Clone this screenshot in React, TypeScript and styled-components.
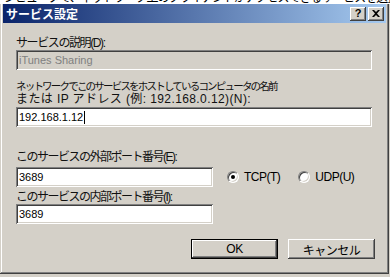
import React from 'react';
import styled, { createGlobalStyle } from 'styled-components';

const GlobalStyle = createGlobalStyle`
  html, body {
    margin: 0;
    padding: 0;
    background: #d4d0c8;
    overflow: hidden;
  }
  body {
    font-family: 'Liberation Sans', 'Noto Sans CJK JP', sans-serif;
    font-size: 12px;
    color: #000;
  }
`;

export default function App() {
  return (
    <>
      <GlobalStyle />
      <Backdrop>
        <BackdropText>
          ンピュータで、ネットワーク上のクライアントがアクセスできるサービスを選択してください。
        </BackdropText>
      </Backdrop>
      <Window>
        <TitleBar>
          <Title>サービス設定</Title>
          <CaptionButtons>
            <CaptionButton>?</CaptionButton>
            <CaptionButton>
              <svg width='8' height='7' viewBox='0 0 8 7'>
                <path
                  d='M0 0h2l2 2 2-2h2L5 3.5 8 7H6L4 5 2 7H0l3-3.5z'
                  fill='#000'
                />
              </svg>
            </CaptionButton>
          </CaptionButtons>
        </TitleBar>
        <Client>
          <Label $top={14} $bottom={0}>
            <Line $spacing={-1.4}>サービスの説明(D):</Line>
          </Label>
          <Field $width={356} $disabled>
            iTunes Sharing
          </Field>
          <Label $top={10} $bottom={1}>
            <Line $spacing={-1.8} $size={10.5}>
              ネットワークでこのサービスをホストしているコンピュータの名前
            </Line>
            <Line $spacing={0.4}>または IP アドレス (例: 192.168.0.12)(N):</Line>
          </Label>
          <Field $width={356}>
            192.168.1.12
            <Caret />
          </Field>
          <Label $top={24} $bottom={3}>
            <Line $spacing={-1.5}>このサービスの外部ポート番号(E):</Line>
          </Label>
          <PortRow>
            <Field $width={197}>3689</Field>
            <RadioGroup>
              <RadioOption>
                <Radio $checked />
                TCP(T)
              </RadioOption>
              <RadioOption>
                <Radio />
                UDP(U)
              </RadioOption>
            </RadioGroup>
          </PortRow>
          <Label $top={4} $bottom={0}>
            <Line $spacing={-1.5}>このサービスの内部ポート番号(I):</Line>
          </Label>
          <Field $width={197}>3689</Field>
          <ButtonRow>
            <PushButton $default>OK</PushButton>
            <PushButton>キャンセル</PushButton>
          </ButtonRow>
        </Client>
      </Window>
    </>
  );
}

const Backdrop = styled.div`
  height: 4px;
  overflow: hidden;
  background: #fff;
`;

const BackdropText = styled.div`
  margin-top: -8px;
  line-height: 12px;
  white-space: nowrap;
  padding-left: 4px;
  letter-spacing: -1px;
`;

const Window = styled.div`
  width: 389px;
  height: 270px;
  box-sizing: border-box;
  padding: 0 3px 3px 3px;
  background: #d4d0c8;
  box-shadow: inset -1px -1px #404040, inset 1px 0 #d4d0c8,
    inset -2px -2px #808080, inset 2px 0 #ffffff;
  display: flex;
  flex-direction: column;
`;

const TitleBar = styled.div`
  height: 19px;
  flex-shrink: 0;
  display: flex;
  align-items: center;
  justify-content: space-between;
  padding: 0 2px 0 3px;
  background: linear-gradient(to right, #0a246a, #a6caf0);
`;

const Title = styled.div`
  color: #fff;
  font-family: 'Noto Sans CJK JP', sans-serif;
  font-weight: bold;
  font-size: 12px;
  line-height: 14px;
`;

const CaptionButtons = styled.div`
  display: flex;
  gap: 2px;
`;

const CaptionButton = styled.div`
  width: 16px;
  height: 14px;
  box-sizing: border-box;
  background: #d4d0c8;
  box-shadow: inset -1px -1px #404040, inset 1px 1px #ffffff,
    inset -2px -2px #808080;
  display: flex;
  align-items: center;
  justify-content: center;
  font-family: 'Liberation Sans', sans-serif;
  font-weight: bold;
  font-size: 11px;
  line-height: 1;
`;

const Client = styled.div`
  display: flex;
  flex-direction: column;
  padding: 0 0 0 13px;
`;

const Label = styled.div<{ $top: number; $bottom: number }>`
  margin-top: ${(p) => p.$top}px;
  margin-bottom: ${(p) => p.$bottom}px;
  line-height: 13px;
  font-size: 12px;
  white-space: nowrap;
  color: #111;
`;

const Line = styled.span<{ $spacing: number; $size?: number }>`
  display: block;
  font-size: ${(p) => p.$size ?? 12}px;
  letter-spacing: ${(p) => p.$spacing}px;
`;

const Field = styled.div<{ $width: number; $disabled?: boolean }>`
  width: ${(p) => p.$width}px;
  height: 20px;
  flex-shrink: 0;
  box-sizing: border-box;
  padding: 0 3px;
  display: flex;
  align-items: center;
  background: ${(p) => (p.$disabled ? '#d4d0c8' : '#ffffff')};
  color: ${(p) => (p.$disabled ? '#808080' : '#000000')};
  box-shadow: inset 1px 1px #808080, inset -1px -1px #ffffff,
    inset 2px 2px #404040, inset -2px -2px #d4d0c8;
  font-size: 11px;
  white-space: nowrap;
`;

const Caret = styled.span`
  display: inline-block;
  width: 1px;
  height: 13px;
  background: #000;
  margin-left: 1px;
`;

const PortRow = styled.div`
  display: flex;
  align-items: center;
`;

const RadioGroup = styled.div`
  display: flex;
  gap: 18px;
  margin-left: 14px;
`;

const RadioOption = styled.div`
  display: flex;
  align-items: center;
  gap: 5px;
  letter-spacing: -0.5px;
`;

const Radio = styled.span<{ $checked?: boolean }>`
  position: relative;
  width: 12px;
  height: 12px;
  border-radius: 50%;
  box-sizing: border-box;
  background: #fff;
  border: 1px solid;
  border-color: #808080 #ffffff #ffffff #808080;
  box-shadow: inset 1px 1px #404040, inset -1px -1px #d4d0c8;
  &::after {
    content: '';
    display: ${(p) => (p.$checked ? 'block' : 'none')};
    position: absolute;
    left: 3px;
    top: 3px;
    width: 4px;
    height: 4px;
    border-radius: 50%;
    background: #000;
  }
`;

const ButtonRow = styled.div`
  display: flex;
  justify-content: flex-end;
  gap: 10px;
  margin-top: 15px;
  padding-right: 11px;
`;

const PushButton = styled.div<{ $default?: boolean }>`
  width: 87px;
  height: 20px;
  box-sizing: border-box;
  display: flex;
  align-items: center;
  justify-content: center;
  background: #d4d0c8;
  border: ${(p) => (p.$default ? '1px solid #000' : 'none')};
  box-shadow: inset -1px -1px #404040, inset 1px 1px #ffffff,
    inset -2px -2px #808080;
  font-size: 12px;
  letter-spacing: -0.5px;
`;
